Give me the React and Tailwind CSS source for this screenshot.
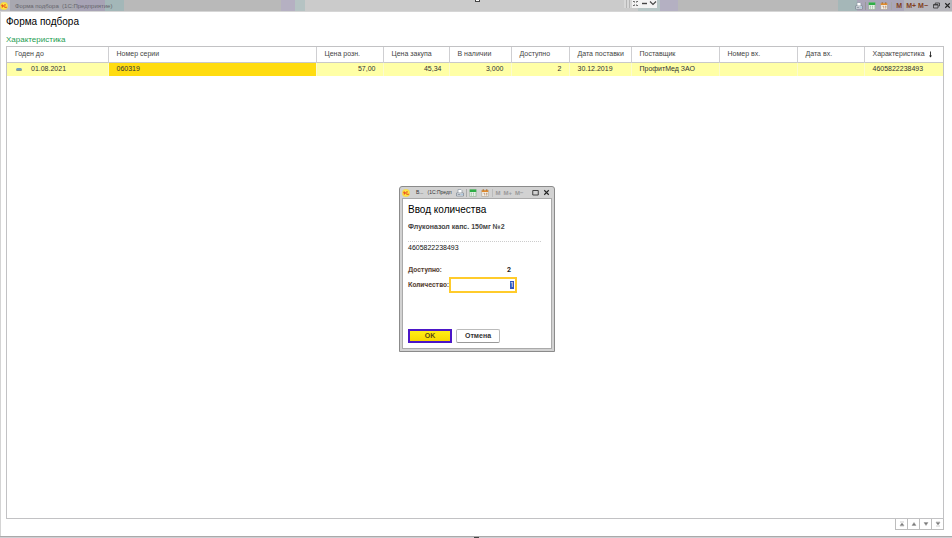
import React from "react";

const columns = [
  { title: "Годен до", value: "01.08.2021", width: "w-[101px]", marker: true },
  { title: "Номер серии", value: "060319", width: "", current: true },
  { title: "Цена розн.", value: "57,00", width: "w-[67px]", numeric: true },
  { title: "Цена закупа", value: "45,34", width: "w-[66px]", numeric: true },
  { title: "В наличии", value: "3,000", width: "w-[62px]", numeric: true },
  { title: "Доступно", value: "2", width: "w-[58px]", numeric: true },
  { title: "Дата поставки", value: "30.12.2019", width: "w-[62px]" },
  { title: "Поставщик", value: "ПрофитМед ЗАО", width: "w-[88px]" },
  { title: "Номер вх.", value: "", width: "w-[78px]" },
  { title: "Дата вх.", value: "", width: "w-[67px]" },
  { title: "Характеристика", value: "4605822238493", width: "w-[79px]", sorted: true },
];

function Logo() {
  return (
    <svg className="h-2 w-2 shrink-0" viewBox="0 0 16 16" aria-hidden="true">
      <circle cx="8" cy="8" r="7.6" fill="#ffe640" stroke="#f0d040" strokeWidth=".8" />
      <path d="M3 6.500 4.500 5.500V11M11.500 6C9 5 7.500 6.300 7.500 8s1.500 2.500 3 2.500H13.500" fill="none" stroke="#e02a1a" strokeWidth="2" />
    </svg>
  );
}

function PrintIcon() {
  return (
    <svg className="h-2 w-2" viewBox="0 0 16 16" aria-hidden="true">
      <path d="M4 8V1h6l2 2v5" fill="#fff" stroke="#8d98a4" strokeWidth="1.400" />
      <path d="M1 8h14v6H1z" fill="#eef2f6" stroke="#75818e" strokeWidth="1.400" />
      <path d="M3 11h6" stroke="#75818e" strokeWidth="1.500" />
      <path d="M11 11h2" stroke="#3f86c4" strokeWidth="1.500" />
    </svg>
  );
}

function CalcIcon() {
  return (
    <svg className="h-2 w-2" viewBox="0 0 16 16" aria-hidden="true">
      <path d="M1.500 1h13v14h-13z" fill="#e6efe6" stroke="#86a487" />
      <path d="M1.500 1h13v5h-13z" fill="#2fae46" />
      <path d="M4 8.500h2m2 0h2m2 0h1M4 12h2m2 0h2m2 0h1" stroke="#7ba07f" strokeWidth="1.500" />
    </svg>
  );
}

function CalendarIcon() {
  return (
    <svg className="h-2 w-2" viewBox="0 0 16 16" aria-hidden="true">
      <path d="M1.500 2.500h13V15h-13z" fill="#f4f1ea" stroke="#9c9284" />
      <path d="M1.500 2.500h13V6h-13z" fill="#e08a2c" />
      <path d="M4.500 0v4m7-4v4" stroke="#a4682c" strokeWidth="1.500" />
      <path d="M5 8.500h2.500V13M10 8.500h2L11 13" fill="none" stroke="#a66a3a" strokeWidth="1.200" />
    </svg>
  );
}

function CloseIcon() {
  return (
    <svg className="h-[7px] w-[7px]" viewBox="0 0 14 14" aria-hidden="true">
      <path d="m2.500 2.500 9 9m0-9-9 9" stroke="#222" strokeWidth="2.200" />
    </svg>
  );
}

function RestoreIcon() {
  return (
    <svg className="h-[7px] w-[7px]" viewBox="0 0 14 14" aria-hidden="true">
      <path d="M4.500 5V2h8.500v6h-2.500M1 5h9v7H1zM1 6h9" fill="none" stroke="#333" strokeWidth="1.600" />
    </svg>
  );
}

function MaximizeIcon() {
  return (
    <svg className="h-[7px] w-[7px]" viewBox="0 0 14 14" aria-hidden="true">
      <path d="M1.500 3h11v9h-11z" fill="none" stroke="#333" strokeWidth="1.800" />
    </svg>
  );
}

function SessionBar() {
  return (
    <div className="absolute top-0 left-[66%] flex h-2 w-[33px] -translate-x-1 items-stretch">
      <span className="w-2 bg-[repeating-linear-gradient(90deg,#d8d8d8_0_2px,#b5b5b5_2px_3px)]" />
      <svg className="h-2 flex-1 bg-[#f3f3f3]" viewBox="0 0 25 8" fill="none" stroke="#444" aria-hidden="true">
        <path d="M1 1.500h1.500v1M6 1.500H4.500v1M1 5.500h1.500v-1M6 5.500H4.500v-1" strokeWidth=".8" />
        <path d="M10 3.500h5" strokeWidth="1.400" />
        <path d="m18 1.500 3 3 3-3" strokeWidth="1.100" />
      </svg>
    </div>
  );
}

function MainTitleBar() {
  return (
    <header className="relative flex h-3 shrink-0 items-center border-b border-[#d6d6d6] pr-px text-[7px] leading-none bg-[linear-gradient(90deg,#bab9bf_0_1%,#a8a8b0_1%_8%,#a7a3b5_8%_11%,#a3b7b8_11%_13%,#b9b9b9_13%_29.500%,#b5b0c2_29.500%_31%,#b5c3c3_31%_32%,#cbcbcb_32%_67%,#b6c5c5_67%_69.300%,#b4b0c2_69.300%_71.200%,#b9b9b9_71.200%_88%,#a5b7b8_88%_90%,#aaa6b8_90%_95%,#b6b5bb_95%)]">
      <Logo />
      <span className="ml-[7px] text-[6px] whitespace-nowrap text-[#66666c]">Форма подбора&nbsp; (1С:Предприятие)</span>
      <SessionBar />
      <span className="absolute top-0 left-1/2 h-[2px] w-[5px] -translate-x-px border border-t-0 border-[#444] bg-white" />
      <div className="ml-auto flex items-center text-[7px] font-bold text-[#814020]">
        <button aria-label="Печать"><PrintIcon /></button>
        <span className="ml-[2px] h-2 w-px bg-[#999]" />
        <button className="ml-[2px]" aria-label="Калькулятор"><CalcIcon /></button>
        <button className="ml-1" aria-label="Календарь"><CalendarIcon /></button>
        <span className="ml-[3px] h-2 w-px bg-[#a5a5a5]" />
        <button className="ml-1">M</button>
        <button className="ml-1">M+</button>
        <button className="ml-[2px]">M−</button>
        <button className="ml-[5px]" aria-label="Восстановить"><RestoreIcon /></button>
        <button className="ml-1" aria-label="Закрыть"><CloseIcon /></button>
      </div>
    </header>
  );
}

function SeriesTable() {
  return (
    <table className="w-full table-fixed border-collapse text-[7px] leading-[8px] text-[#444]">
      <thead>
        <tr className="h-[15px] border-b border-[#c9c9c9]">
          {columns.map((c) => (
            <th key={c.title} className={`${c.width} border-r border-[#cfcfd2] pl-2 text-left font-normal whitespace-nowrap last:border-r-0`}>
              {c.sorted ? (
                <span className="flex items-center justify-between pr-2.5">
                  {c.title}
                  <svg className="h-[7px] w-[5px]" viewBox="0 0 10 14" aria-hidden="true">
                    <path d="M5 1v10" stroke="#222" strokeWidth="1.800" />
                    <path d="M2 9h6l-3 4z" fill="#222" />
                  </svg>
                </span>
              ) : (
                c.title
              )}
            </th>
          ))}
        </tr>
      </thead>
      <tbody>
        <tr className="h-[14px] bg-[#ffffa6] text-[#333]">
          {columns.map((c) => (
            <td
              key={c.title}
              className={`border-r border-[#fbfbd0] pl-2 whitespace-nowrap last:border-r-0 ${c.numeric ? "pr-[7px] text-right" : ""} ${c.current ? "bg-[#ffdc10]" : ""}`}
            >
              {c.marker ? (
                <span className="flex items-center gap-[9px] pl-px">
                  <span className="h-[3px] w-1.5 rounded-xs border-b border-[#8c9a8c] bg-[#6fa0c4]" />
                  {c.value}
                </span>
              ) : (
                c.value
              )}
            </td>
          ))}
        </tr>
      </tbody>
    </table>
  );
}

const scrollButtons = [
  { label: "В начало", d: "M4 4h8M8 6l4 5H4zM4 12h8" },
  { label: "Вверх", d: "M8 5l4 6H4z" },
  { label: "Вниз", d: "M8 11l4-6H4z" },
  { label: "В конец", d: "M4 12h8M8 10l4-5H4zM4 4h8" },
];

function QuantityDialog() {
  return (
    <div className="fixed inset-0 flex items-center justify-center pl-[2px]">
      <section role="dialog" aria-labelledby="dialog-title" className="w-[156px] rounded-t-[3px] border border-[#8b8b8b] bg-[#d2d2d2] px-[2px] pb-[2px]">
        <div className="flex h-[11px] items-center text-[5px] leading-none text-[#333]">
          <Logo />
          <span className="ml-1.5">В...</span>
          <span className="ml-1 w-[25px] whitespace-nowrap">(1С:Предп</span>
          <button className="ml-[3px]" aria-label="Печать"><PrintIcon /></button>
          <span className="ml-[2px] h-2 w-px bg-[#aaa]" />
          <button className="ml-[2px]" aria-label="Калькулятор"><CalcIcon /></button>
          <button className="ml-1" aria-label="Календарь"><CalendarIcon /></button>
          <span className="ml-[3px] h-2 w-px bg-[#bbb]" />
          <span className="ml-[3px] flex gap-[3px] text-[6px] font-bold text-[#999]">
            <button disabled>M</button>
            <button disabled>M+</button>
            <button disabled>M−</button>
          </span>
          <button className="ml-auto" aria-label="Развернуть"><MaximizeIcon /></button>
          <button className="mr-[2px] ml-1" aria-label="Закрыть"><CloseIcon /></button>
        </div>
        <form className="border border-[#aaa] bg-white pt-[6px] pr-2.5 pb-[5px] pl-[5px] text-[7px] leading-[8px] font-bold text-[#5a4638]" onSubmit={(e) => e.preventDefault()}>
          <h2 id="dialog-title" className="text-[10px] leading-[10px] font-normal text-black">Ввод количества</h2>
          <p className="mt-2 text-[#444]">Флуконазол капс. 150мг №2</p>
          <div className="mt-[10px] border-t border-dotted border-[#ccc]" />
          <p className="mt-[2px] font-normal text-[#111]">4605822238493</p>
          <div className="mt-[14px] flex w-[103px] justify-between font-[Roboto,sans-serif]">
            <span>Доступно:</span>
            <span className="text-[#222]">2</span>
          </div>
          <div className="mt-[3px] flex items-center font-[Roboto,sans-serif]">
            <label htmlFor="quantity" className="w-[41px] whitespace-nowrap">Количество:</label>
            <span className="flex h-4 w-[68px] items-center justify-end border-2 border-[#ffcb2b] bg-white pr-px">
              <input id="quantity" defaultValue="1" className="h-2 w-1 bg-[#3355b8] text-right text-[7px] leading-[8px] font-normal text-white outline-none" />
            </span>
          </div>
          <div className="mt-9 flex gap-1 text-[#333]">
            <button type="submit" className="h-[14px] w-[44px] border-2 border-[#4b16c8] bg-linear-to-b from-[#ffee16] to-[#f8d800] text-[#5b4a10]">OK</button>
            <button type="button" className="h-[14px] w-[44px] rounded-xs border border-[#bbb] border-b-[#999] bg-white">Отмена</button>
          </div>
        </form>
      </section>
    </div>
  );
}

export default function App() {
  return (
    <div className="flex h-screen flex-col overflow-hidden bg-white font-['Liberation_Sans',Arial,sans-serif]">
      <MainTitleBar />
      <main className="flex min-h-0 flex-1 flex-col border-l border-[#d4d4d4] pr-2 pb-[6px] pl-[5px]">
        <h1 className="mt-1 text-[10px] leading-[12px] text-black">Форма подбора</h1>
        <h2 className="mt-[7px] text-[8px] leading-[10px] text-[#1c9c50]">Характеристика</h2>
        <div className="mt-px min-h-0 flex-1 border border-[#c2c2c4]">
          <SeriesTable />
        </div>
        <div className="flex self-end border-r border-[#bdbdbd]">
          {scrollButtons.map((b) => (
            <button key={b.label} aria-label={b.label} className="flex h-[11px] w-3 items-center justify-center border-b border-l border-[#bdbdbd]">
              <svg className="h-2 w-2" viewBox="0 0 16 16" aria-hidden="true">
                <path d={b.d} fill="#777" stroke="#999" strokeWidth="1" />
              </svg>
            </button>
          ))}
        </div>
      </main>
      <footer className="flex h-[2px] shrink-0 justify-center border-t border-[#aaa] bg-[#cfcfd4]">
        <span className="h-px w-[5px] bg-[#444]" />
      </footer>
      <QuantityDialog />
    </div>
  );
}
